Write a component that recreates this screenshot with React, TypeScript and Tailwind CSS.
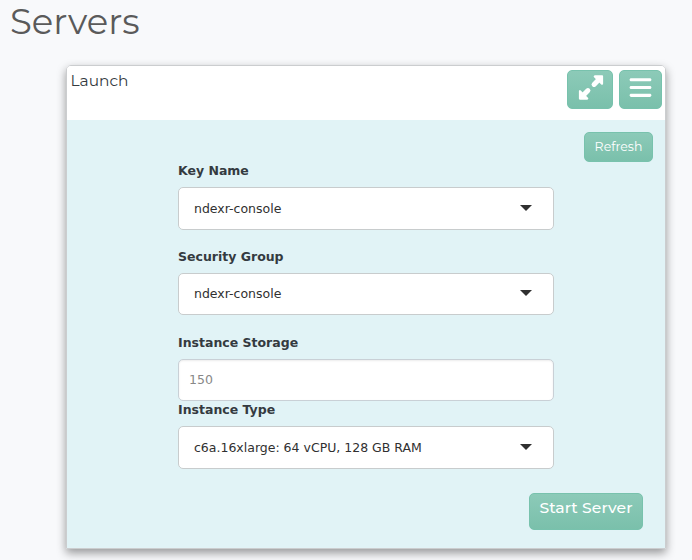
import type { ReactNode } from 'react';
import { FaBars } from 'react-icons/fa6';

const green =
  'border border-[#78c2ad] bg-linear-to-b from-[#8ccab8] to-[#7ac0ab] text-white rounded-[5px] flex justify-center';

function Label({ children }: { children: ReactNode }) {
  return <label className="block h-[19px] text-[12.5px] leading-[19px] font-bold text-[#343a40] whitespace-nowrap">{children}</label>;
}

function Select({ value, className }: { value: string; className: string }) {
  return (
    <div className={`flex items-center justify-between rounded-[5px] border border-[#c8cccd] bg-white pl-[15px] pr-[21px] text-[12.5px] text-[#303030] ${className}`}>
      <span className="pt-px">{value}</span>
      <svg width="12" height="6" viewBox="0 0 12 6" className="-mt-0.5"><path d="M0 0H12L6 6Z" fill="#303030" /></svg>
    </div>
  );
}

function ExpandIcon() {
  return (
    <svg width="25" height="25" viewBox="0 0 26 26" fill="white" stroke="white" strokeLinejoin="round" strokeLinecap="round" className="translate-x-[0.5px]">
      <path d="M17 1.5H24.5V9Z" strokeWidth="2.4" />
      <path d="M16.2 9.8L21 5" strokeWidth="5.2" />
      <path d="M1.5 17V24.5H9Z" strokeWidth="2.4" />
      <path d="M9.8 16.2L5 21" strokeWidth="5.2" />
    </svg>
  );
}

export default function App() {
  return (
    <main className="flex h-[560px] w-[692px] flex-col overflow-hidden bg-[#f8f9fb] font-['Montserrat','Inter',sans-serif]">
      <h1 className="h-[65px] shrink-0 pl-[10px] text-[35.5px] leading-[43px] font-normal text-[#5a5a5a]">Servers</h1>
      <section className="ml-[66px] flex h-[484px] w-[600px] flex-col overflow-hidden rounded-t-[5px] border border-[#cbcdcf] shadow-[0_4px_10px_rgba(0,0,0,0.4)]">
        <header className="flex h-[54px] shrink-0 justify-between bg-white pt-1 pr-[3px] pl-[3.5px]">
          <span className="text-[15.4px] leading-[22px] font-normal text-[#343a40]">Launch</span>
          <div className="flex gap-1.5">
            <button className={`${green} h-[39px] w-[46px] pt-[4px]`}><ExpandIcon /></button>
            <button className={`${green} h-[39px] w-[43px] pt-[4px]`}><FaBars size={25} /></button>
          </div>
        </header>
        <div className="flex grow flex-col bg-[#e1f3f6]">
          <div className="flex h-[41px] shrink-0 justify-end pt-3 pr-3">
            <button className={`${green} h-[30px] w-[69px] text-[12.5px] leading-[27px] font-normal`}>Refresh</button>
          </div>
          <form className="ml-[111px] flex w-[376px] flex-col font-['DejaVu_Sans',sans-serif]">
            <Label>Key Name</Label>
            <Select value="ndexr-console" className="mt-[7px] h-[43px]" />
            <div className="h-[17px]" />
            <Label>Security Group</Label>
            <Select value="ndexr-console" className="mt-[7px] h-[42px]" />
            <div className="h-[18px]" />
            <Label>Instance Storage</Label>
            <input placeholder="150" className="mt-[7px] h-[42px] rounded-[5px] border border-[#c9d0d6] bg-white px-[10px] pb-px text-[12.5px] shadow-[inset_0_1px_2px_rgba(0,0,0,0.08)] placeholder:text-[#888888]" />
            <div className="-mt-px"><Label>Instance Type</Label></div>
            <Select value="c6a.16xlarge: 64 vCPU, 128 GB RAM" className="mt-[7px] h-[43px]" />
          </form>
          <div className="mt-6 flex justify-end pr-[22px]">
            <button className={`${green} h-[37px] w-[114px] text-[15.6px] leading-[28px] font-medium tracking-[0.04px] whitespace-nowrap`}>Start Server</button>
          </div>
        </div>
      </section>
    </main>
  );
}
